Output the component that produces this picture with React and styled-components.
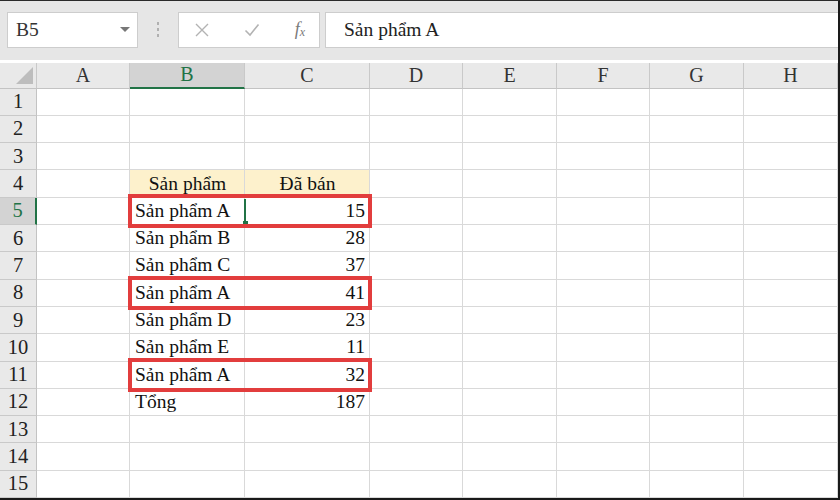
import React from "react";
import styled, { createGlobalStyle } from "styled-components";

const Global = createGlobalStyle`
  html, body { margin: 0; padding: 0; background: #fff; }
  body { font-family: "Liberation Serif", "DejaVu Serif", serif; }
`;

const COLS = "37px 93px 115px 125px 93px 94px 93px 94px 94px";
const ROW_H = 27.3;
const SERIF = `"Liberation Serif", "Times New Roman", "DejaVu Serif", serif`;

const Frame = styled.div`
  width: 840px;
  height: 500px;
  box-sizing: border-box;
  border-top: 1px solid #2a2a2a;
  border-right: 2px solid #1a1a1a;
  border-bottom: 2px solid #1a1a1a;
  background: #e6e6e6;
  overflow: hidden;
  display: flex;
  flex-direction: column;
  font-family: ${SERIF};
`;

const Toolbar = styled.div`
  height: 59px;
  box-sizing: border-box;
  padding: 11px 0 12px 7px;
  display: flex;
  align-items: stretch;
  background: #e6e6e6;
`;

const Box = styled.div`
  background: #fff;
  border: 1px solid #cdcdcd;
  box-sizing: border-box;
  display: flex;
  align-items: center;
`;

const NameBox = styled(Box)`
  width: 131px;
  padding: 0 8px 0 8px;
  justify-content: space-between;
  font-size: 19.5px;
  color: #333;
`;

const Caret = styled.span`
  width: 0;
  height: 0;
  border-left: 5px solid transparent;
  border-right: 5px solid transparent;
  border-top: 5px solid #777;
  margin-right: -1px;
`;

const Grip = styled.div`
  width: 40px;
  display: flex;
  flex-direction: column;
  align-items: center;
  justify-content: center;
  gap: 3px;
  & > span {
    width: 2px;
    height: 3px;
    background: #b0b0b0;
  }
`;

const FuncBox = styled(Box)`
  width: 142px;
  padding: 0 14px 0 16px;
  justify-content: space-between;
`;

const Fx = styled.span`
  font-family: ${SERIF};
  font-style: italic;
  font-size: 18px;
  color: #7a7a7a;
  & sub {
    font-size: 12px;
    vertical-align: baseline;
    position: relative;
    top: 1px;
  }
`;

const FormulaBox = styled(Box)`
  flex: 1;
  margin-left: 5px;
  padding-left: 18px;
  font-size: 19.5px;
  color: #222;
  border-right: none;
`;

const Sheet = styled.div`
  flex: 1;
  background: #fff;
  display: flex;
  flex-direction: column;
`;

const Row = styled.div`
  display: grid;
  grid-template-columns: ${COLS};
  grid-template-rows: 100%;
  height: ${(p) => (p.$header ? "29px" : `${ROW_H}px`)};
  flex: none;
`;

const Corner = styled.div`
  grid-area: 1 / 1;
  background: #e9e9e9;
  border-right: 1px solid #c9c9c9;
  border-bottom: 1px solid #c3c3c3;
  margin-top: 3px;
  position: relative;
  & > svg { position: absolute; right: 3px; bottom: 4px; }
`;

const ColHead = styled.div`
  grid-area: 1 / ${(p) => p.$col};
  background: ${(p) => (p.$active ? "#d3d3d3" : "#e9e9e9")};
  border-right: 1px solid #c9c9c9;
  border-bottom: ${(p) => (p.$active ? "2px solid #217346" : "1px solid #c3c3c3")};
  margin-top: 3px;
  display: flex;
  align-items: center;
  justify-content: center;
  font-size: 20px;
  color: ${(p) => (p.$active ? "#217346" : "#333")};
`;

const RowHead = styled.div`
  grid-area: 1 / 1;
  background: ${(p) => (p.$active ? "#d3d3d3" : "#e9e9e9")};
  border-right: ${(p) => (p.$active ? "2px solid #217346" : "1px solid #c3c3c3")};
  border-bottom: 1px solid #c9c9c9;
  display: flex;
  align-items: center;
  justify-content: center;
  font-size: 20.5px;
  color: ${(p) => (p.$active ? "#217346" : "#222")};
`;

const Cell = styled.div`
  grid-area: 1 / ${(p) => p.$col};
  border-right: 1px solid #d9d9d9;
  border-bottom: 1px solid #d9d9d9;
  background: ${(p) => (p.$fill ? "#fdf1cc" : "#fff")};
  display: flex;
  align-items: center;
  justify-content: ${(p) =>
    p.$align === "right" ? "flex-end" : p.$align === "center" ? "center" : "flex-start"};
  padding: 0 4px 0 5px;
  font-size: 19.5px;
  color: #111;
  white-space: nowrap;
  position: relative;
  box-sizing: border-box;
  min-width: 0;
`;

const Selection = styled.div`
  position: absolute;
  right: -2px;
  top: 1px;
  bottom: 1px;
  width: 2px;
  background: #217346;
  z-index: 1;
  &::after {
    content: "";
    position: absolute;
    left: -1px;
    bottom: -3px;
    width: 5px;
    height: 5px;
    background: #217346;
  }
`;

const Highlight = styled.div`
  grid-area: 1 / 3 / 2 / 5;
  position: relative;
  pointer-events: none;
  z-index: 2;
  &::after {
    content: "";
    position: absolute;
    left: -2px;
    right: -2px;
    top: -4px;
    bottom: -3px;
    border: 4px solid #e23d3d;
  }
`;

const columns = ["A", "B", "C", "D", "E", "F", "G", "H"];

const data = {
  4: { b: "Sản phẩm", c: "Đã bán", header: true },
  5: { b: "Sản phẩm A", c: "15", hl: true, sel: true },
  6: { b: "Sản phẩm B", c: "28" },
  7: { b: "Sản phẩm C", c: "37" },
  8: { b: "Sản phẩm A", c: "41", hl: true },
  9: { b: "Sản phẩm D", c: "23" },
  10: { b: "Sản phẩm E", c: "11" },
  11: { b: "Sản phẩm A", c: "32", hl: true },
  12: { b: "Tổng", c: "187" },
};

function XIcon() {
  return (
    <svg width="14" height="14" viewBox="0 0 14 14">
      <path d="M1 1 L13 13 M13 1 L1 13" stroke="#b3b3b3" strokeWidth="1.4" fill="none" />
    </svg>
  );
}

function CheckIcon() {
  return (
    <svg width="16" height="14" viewBox="0 0 16 14">
      <path d="M1.5 7.5 L6 12 L14.5 1.5" stroke="#b3b3b3" strokeWidth="1.6" fill="none" />
    </svg>
  );
}

export default function App() {
  const rows = Array.from({ length: 15 }, (_, i) => i + 1);
  const empty = [2, 5, 6, 7, 8, 9];
  return (
    <>
      <Global />
      <Frame>
        <Toolbar>
          <NameBox>
            <span>B5</span>
            <Caret />
          </NameBox>
          <Grip>
            <span />
            <span />
            <span />
          </Grip>
          <FuncBox>
            <XIcon />
            <CheckIcon />
            <Fx>
              f<sub>x</sub>
            </Fx>
          </FuncBox>
          <FormulaBox>Sản phẩm A</FormulaBox>
        </Toolbar>
        <Sheet>
          <Row $header>
            <Corner>
              <svg width="17" height="17" viewBox="0 0 17 17">
                <polygon points="17,0 17,17 0,17" fill="#bdbdbd" />
              </svg>
            </Corner>
            {columns.map((c, i) => (
              <ColHead key={c} $col={i + 2} $active={c === "B"}>
                {c}
              </ColHead>
            ))}
          </Row>
          {rows.map((r) => {
            const d = data[r] || {};
            return (
              <Row key={r}>
                <RowHead $active={r === 5}>{r}</RowHead>
                {empty.map((col) => (
                  <Cell key={col} $col={col} />
                ))}
                <Cell $col={3} $fill={d.header} $align={d.header ? "center" : "left"}>
                  {d.b}
                  {d.sel && <Selection />}
                </Cell>
                <Cell $col={4} $fill={d.header} $align={d.header ? "center" : "right"}>
                  {d.c}
                </Cell>
                {d.hl && <Highlight />}
              </Row>
            );
          })}
        </Sheet>
      </Frame>
    </>
  );
}
